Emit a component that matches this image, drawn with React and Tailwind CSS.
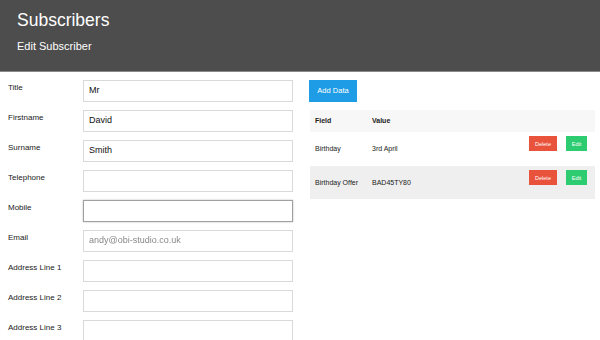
const fields = [
  { label: "Title", value: "Mr" },
  { label: "Firstname", value: "David" },
  { label: "Surname", value: "Smith" },
  { label: "Telephone", value: "" },
  { label: "Mobile", value: "", focus: true },
  { label: "Email", value: "andy@obi-studio.co.uk", blur: true },
  { label: "Address Line 1", value: "" },
  { label: "Address Line 2", value: "" },
  { label: "Address Line 3", value: "" },
];

const rows = [
  { field: "Birthday", value: "3rd April" },
  { field: "Birthday Offer", value: "BAD45TY80" },
];

export default function App() {
  return (
    <div className="w-[600px] h-[340px] overflow-hidden bg-white text-[#222] font-['Liberation_Sans',Arial,sans-serif]">
      <header className="h-[72px] bg-[#4d4d4d] border-b border-[#8a8a8a] px-[17px] pt-[9px]">
        <h1 className="text-[17.5px] leading-[22px] text-white">Subscribers</h1>
        <p className="mt-[9px] text-[11px] leading-[13px] text-white">Edit Subscriber</p>
      </header>

      <main className="flex pt-[8px]">
        <div className="w-[309px] pl-[8px] flex flex-col gap-[8px]">
          {fields.map((f) => (
            <div key={f.label} className="flex">
              <label className="w-[75px] pt-[2px] text-[8px] leading-[11px] text-[#222]">{f.label}</label>
              <div
                className={`w-[210px] h-[22px] flex items-center px-[5px] text-[9px] ${
                  f.focus
                    ? "border border-[#a0a0a0] shadow-[0_0_2px_rgba(0,0,0,0.25)]"
                    : "border border-[#d9d9d9]"
                }`}
              >
                <span className={f.blur ? "blur-[0.6px] text-[#888]" : "text-[#111]"}>{f.value}</span>
              </div>
            </div>
          ))}
        </div>

        <div className="flex-1 pr-[5px]">
          <button className="block h-[22px] w-[48px] bg-[#1f9ce6] text-white text-[7.5px]">Add Data</button>
          <div className="mt-[8px] ml-[1px] text-[7px] leading-[10px]">
            <div className="flex h-[22px] items-center bg-[#f7f7f7] font-bold text-[#222]">
              <div className="w-[62px] pl-[5px]">Field</div>
              <div>Value</div>
            </div>
            {rows.map((r, i) => (
              <div
                key={r.field}
                className={`flex ${i % 2 ? "bg-[#efefef] h-[33px]" : "bg-white h-[34px]"}`}
              >
                <div className="w-[62px] pl-[5px] self-center whitespace-nowrap text-[#222]">{r.field}</div>
                <div className="flex-1 self-center text-[#222]">{r.value}</div>
                <div className="flex gap-[9px] pt-[4px] pr-[8px]">
                  <span className="h-[15px] w-[28px] flex items-center justify-center bg-[#e9533c] text-white text-[5.5px]">
                    Delete
                  </span>
                  <span className="h-[15px] w-[21px] flex items-center justify-center bg-[#2ecc71] text-white text-[5.5px]">
                    Edit
                  </span>
                </div>
              </div>
            ))}
          </div>
        </div>
      </main>
    </div>
  );
}
